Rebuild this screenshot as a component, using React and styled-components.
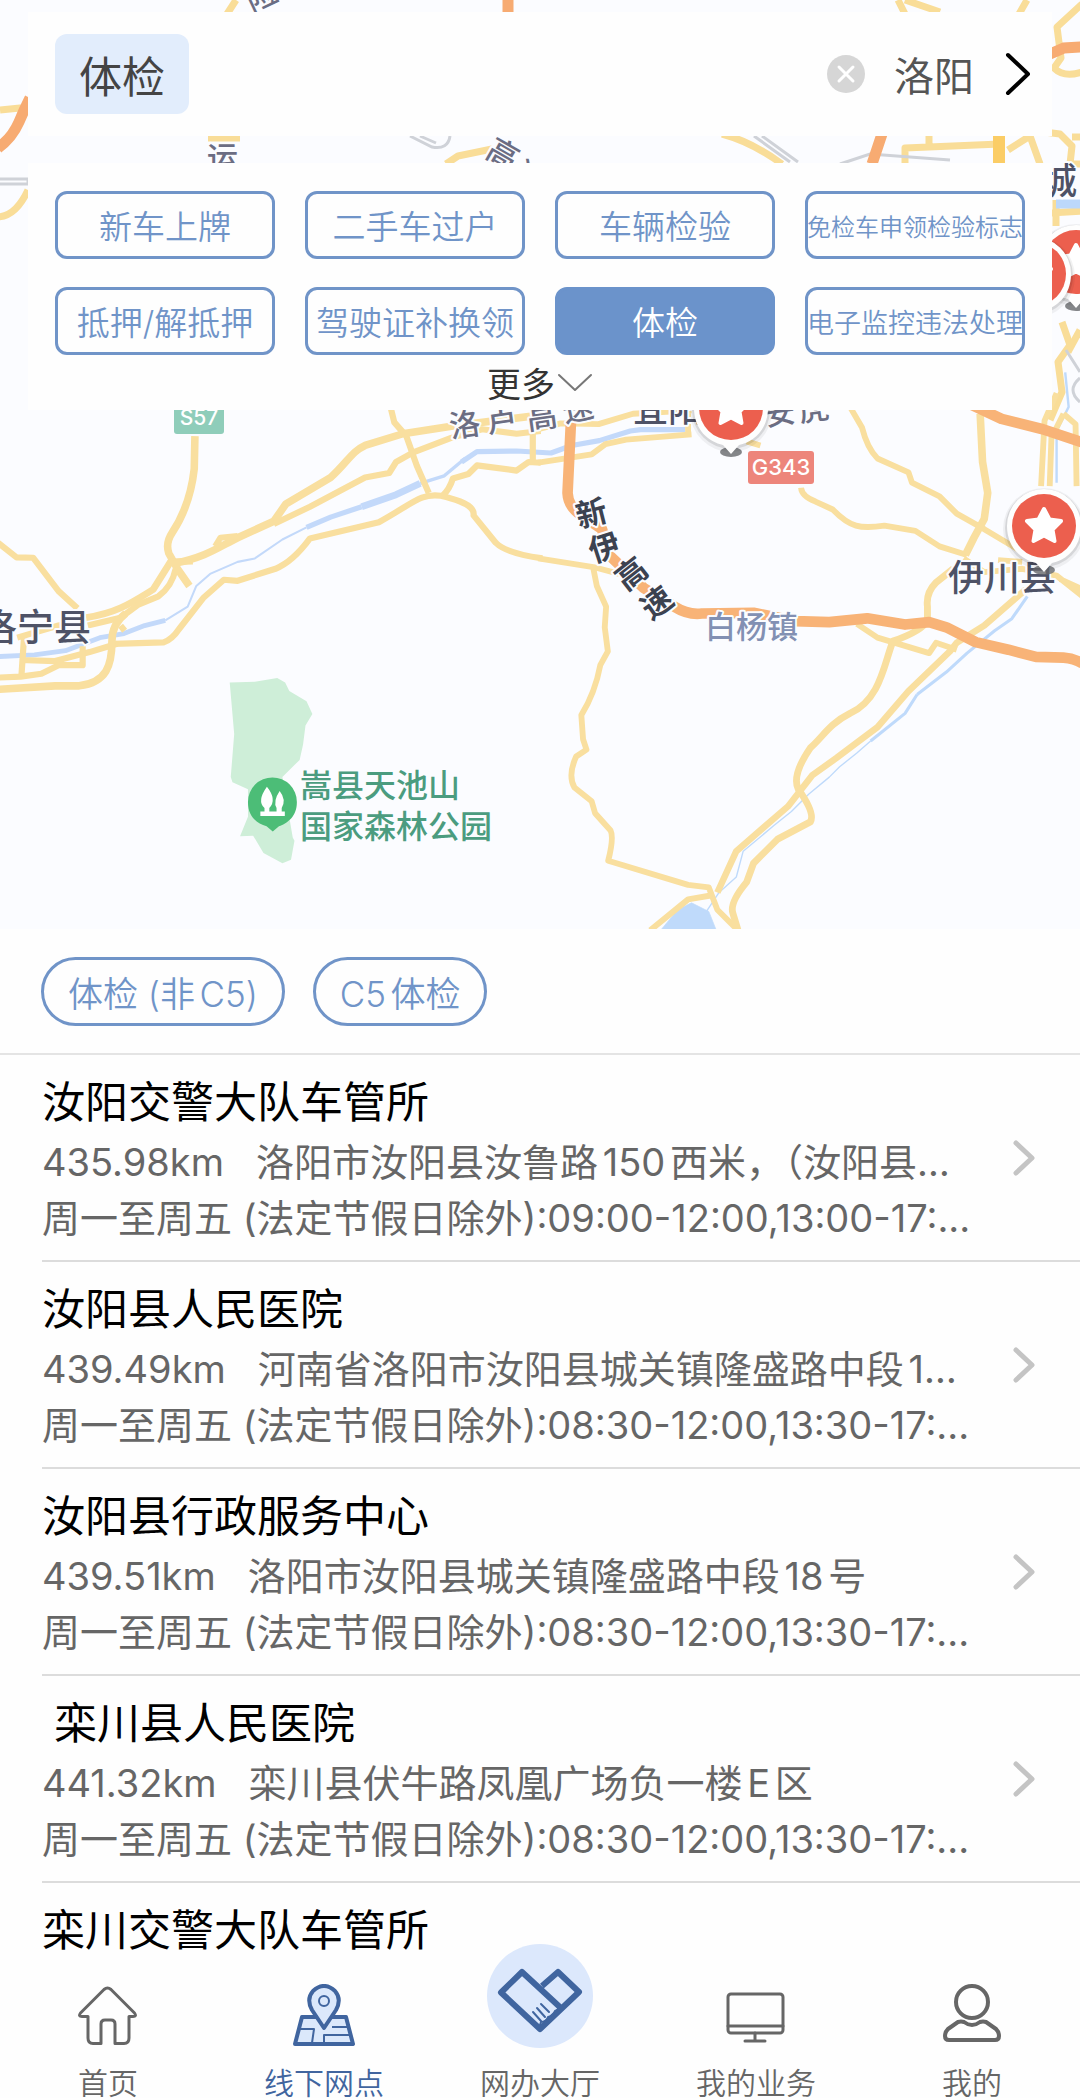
import React, { useState } from 'react';
import styled, { createGlobalStyle } from 'styled-components';

const GlobalStyle = createGlobalStyle`
  * {
    box-sizing: border-box;
  }
  body {
    margin: 0;
    background-color: #fefefe;
    font-family: Inter, "Noto Sans CJK SC", sans-serif;
    text-autospace: normal;
  }
  button, input {
    font-family: inherit;
    cursor: pointer;
  }
`;

const Screen = styled.div`
  display: flex;
  flex-direction: column;
  height: 100vh;
  overflow: hidden;
`;

const MapArea = styled.section`
  position: relative;
  flex: none;
  min-height: 929px;
  padding: 12px 28px;
  background-color: #fbfcff;
  overflow: hidden;
`;

const MapCanvas = styled.svg`
  position: absolute;
  top: 0;
  left: 0;
  width: 100%;
  height: 100%;
`;

const SearchBar = styled.div`
  position: relative;
  display: flex;
  align-items: center;
  height: 124px;
  padding: 0 20px 0 27px;
  background-color: #fefefe;
`;

const Keyword = styled.button`
  height: 80px;
  padding: 0 24px;
  border: none;
  border-radius: 12px;
  background-color: #e2edfc;
  color: #444;
  font-size: 43px;
`;

const ClearButton = styled.button`
  display: flex;
  margin-left: auto;
  padding: 0;
  border: none;
  background: none;
`;

const CityButton = styled.button`
  display: flex;
  align-items: center;
  gap: 30px;
  margin-left: 28px;
  padding: 0;
  border: none;
  background: none;
  color: #555;
  font-size: 40px;
`;

const FilterPanel = styled.div`
  position: relative;
  margin-top: 27px;
  padding: 28px 27px 0;
  background-color: #fefefe;
`;

const Services = styled.div`
  display: grid;
  grid-template-columns: repeat(4, minmax(0, 1fr));
  gap: 28px 30px;
`;

const sizes = { sm: "24px", md: "27px", lg: "33px" };

const ServiceButton = styled.button`
  display: flex;
  align-items: center;
  justify-content: center;
  height: 68px;
  padding: 0;
  border: 3px solid #7094c8;
  border-radius: 12px;
  background-color: ${(props) => (props.$active ? "#6b93cb" : "transparent")};
  border-color: ${(props) => (props.$active ? "#6b93cb" : "#7094c8")};
  color: ${(props) => (props.$active ? "#fff" : "#7094c8")};
  font-size: ${(props) => sizes[props.$size || "lg"]};
  font-weight: 350;
  white-space: nowrap;
`;

const MoreButton = styled.button`
  display: flex;
  align-items: center;
  gap: 2px;
  height: 55px;
  margin: 0 auto;
  padding: 0;
  border: none;
  background: none;
  color: #333;
  font-size: 34px;
`;

const Tags = styled.div`
  display: flex;
  flex: none;
  gap: 28px;
  padding: 28px 41px 27px;
  border-bottom: 2px solid #e4e4e4;
`;

const Tag = styled.button`
  height: 69px;
  padding: 0 24px;
  border: 3px solid #7094c8;
  border-radius: 35px;
  background: none;
  color: #7094c8;
  font-size: 35px;
  font-weight: 350;
`;

const List = styled.ul`
  flex: 1;
  min-height: 0;
  margin: 0;
  padding: 0 0 0 42px;
  list-style: none;
  overflow: hidden;
`;

const Item = styled.li`
  display: flex;
  align-items: center;
  height: 207px;
  padding-right: 44px;
  border-bottom: 2px solid #dcdcdc;
`;

const Details = styled.div`
  flex: 1;
  min-width: 0;
  min-height: 176px;
`;

const Name = styled.h2`
  margin: 0;
  color: #000;
  font-size: 43px;
  font-weight: 400;
  line-height: 64px;
  white-space: pre;
`;

const Info = styled.p`
  display: flex;
  gap: 32px;
  margin: 0;
  color: #666;
  font-size: 38px;
  font-weight: 400;
  line-height: 56px;
  white-space: nowrap;
`;

const TabBar = styled.nav`
  position: relative;
  display: flex;
  flex: none;
  align-items: flex-end;
  height: 138px;
  background-color: #fefefe;
`;

const Tab = styled.a`
  display: flex;
  flex: 1;
  flex-direction: column;
  align-items: center;
  gap: 20px;
  color: ${(props) => (props.$active ? "#41659f" : "#666")};
  font-size: 30px;
  font-weight: 350;
  line-height: 30px;
  text-decoration: none;
`;

const services = [
  { name: "新车上牌" },
  { name: "二手车过户" },
  { name: "车辆检验" },
  { name: "免检车申领检验标志", size: "sm" },
  { name: "抵押/解抵押" },
  { name: "驾驶证补换领" },
  { name: "体检" },
  { name: "电子监控违法处理", size: "md" },
];

const places = [
  {
    name: "汝阳交警大队车管所",
    distance: "435.98km",
    address: "洛阳市汝阳县汝鲁路150西米，（汝阳县…",
    time: "周一至周五 (法定节假日除外):09:00-12:00,13:00-17:...",
  },
  {
    name: "汝阳县人民医院",
    distance: "439.49km",
    address: "河南省洛阳市汝阳县城关镇隆盛路中段1…",
    time: "周一至周五 (法定节假日除外):08:30-12:00,13:30-17:...",
  },
  {
    name: "汝阳县行政服务中心",
    distance: "439.51km",
    address: "洛阳市汝阳县城关镇隆盛路中段18号",
    time: "周一至周五 (法定节假日除外):08:30-12:00,13:30-17:...",
  },
  {
    name: " 栾川县人民医院",
    distance: "441.32km",
    address: "栾川县伏牛路凤凰广场负一楼E区",
    time: "周一至周五 (法定节假日除外):08:30-12:00,13:30-17:...",
  },
  { name: "栾川交警大队车管所" },
];

const MapPin = ({ x, y }) => (
  <g transform={`translate(${x} ${y})`}>
    <ellipse cx="0" cy="44" rx="11" ry="5" fill="#66686c" opacity="0.8" />
    <circle r="41" fill="#000" opacity="0.05" cy="3" />
    <circle r="39" fill="#000" opacity="0.1" cy="2" />
    <path d="M-37 0A37 37 0 1 1 37 0C37 22 22 34 8 37L0 46L-8 37C-22 34 -37 22 -37 0Z" fill="#fefefe" />
    <circle r="32" fill="#ec5f4e" />
    <path
      d="M0 -17L5.500 -6.500L17 -5L8.500 3.500L10.500 15L0 9.500L-10.500 15L-8.500 3.500L-17 -5L-5.500 -6.500Z"
      fill="#fff" stroke="#fff" strokeWidth="4" strokeLinejoin="round"
    />
  </g>
);

const Label = ({ x, y, size = 31, weight = 500, color = "#4e5266", rotate = 0, children }) => (
  <text
    x={x} y={y} fontSize={size} fontWeight={weight} fill={color}
    stroke="#fbfcff" strokeWidth="4" strokeLinejoin="round" paintOrder="stroke"
    transform={rotate ? `rotate(${rotate} ${x} ${y})` : undefined}
  >
    {children}
  </text>
);

const RoadMap = () => (
  <MapCanvas viewBox="0 0 1080 929" preserveAspectRatio="xMidYMin slice" aria-hidden="true">
    <g fill="none" stroke="#f9dd98" strokeWidth="7" strokeLinejoin="round">
      {/* north edge */}
      <path d="M236 0L227 14M898 0L905 14M905 0L940 12M1027 0L1019 14" />
      <path d="M1082 4L1057 27L1061 58L1054 68Q1064 78 1082 72" />
      <path d="M0 110L20 108L28 112M28 190Q16 216 -2 217" />
      <path d="M208 138L240 138M446 164L458 156L492 149" />
      <path d="M722 134Q752 142 782 164M905 164V148L1000 144M929 134V147M1008 150L1030 136L1040 164" />
      <path d="M1044 132L1060 134L1072 146L1070 164L1082 164M1072 137L1082 137" />
      <path d="M1050 213L1082 211M1056 200V226M1062 322L1070 345L1058 362L1062 392L1050 420" />
      <path d="M1080 330L1068 352" />
    </g>
    <path d="M999 134V164" stroke="#fbcd66" strokeWidth="12" />
    <g fill="none" stroke="#cfd2d8" strokeWidth="3">
      <path d="M410 136L432 147Q448 150 450 136M420 136L436 143" />
      <path d="M754 136L790 162M762 136L798 162M840 164L870 154L950 160" />
      <path d="M0 179H28V184H0M1066 350L1080 372M1080 378Q1066 390 1080 402" />
    </g>
    <path d="M1056 204H1082" stroke="#bcd8fb" strokeWidth="9" />
    <g fill="none" stroke="#f7ab72" strokeWidth="11">
      <path d="M508 -2V14M1050 54L1064 48L1082 47M882 134L872 164" />
      <path d="M30 98Q24 110 19 122Q12 138 -2 148" />
    </g>

    {/* rivers */}
    <g transform="translate(0 400) scale(0.3444)" fill="none" stroke="#c3d9fa" strokeLinejoin="round">
      <path d="M-5 745L100 740L190 728L290 690L360 678L420 655L480 640" strokeWidth="14" />
      <path d="M480 640L545 600L570 540L610 505L690 470L740 460L820 405L890 370" strokeWidth="6" />
      <path d="M890 370L960 340L1050 310" strokeWidth="15" />
      <path d="M1050 310L1150 275L1220 242" strokeWidth="20" />
      <path d="M1220 242L1290 220L1350 170" strokeWidth="10" />
      <path d="M1340 180L1385 150L1500 148L1600 154L1660 132L1740 118L1830 90L1860 86H1990" strokeWidth="15" />
    </g>
    <g transform="translate(540 400) scale(0.3444)" fill="none" stroke="#bfdafb" strokeLinejoin="round">
      <path d="M1525 -80L1535 20L1500 90V240" strokeWidth="7" />
      <path d="M1415 570L1370 635L1320 670L1240 735L1180 790L1095 855" strokeWidth="9" />
      <path d="M1095 855L1060 910L960 990" strokeWidth="9" />
      <path d="M960 990L920 1025L870 1065L840 1095L780 1145L730 1195L680 1235L590 1310L570 1385L520 1430L480 1490" strokeWidth="4" />
      <path d="M350 1540L400 1480L440 1460L490 1485L512 1540Z" fill="#bfdafb" strokeWidth="2" />
    </g>

    {/* roads, west side */}
    <g transform="translate(0 400) scale(0.3444)" fill="none" stroke="#f9df9f" strokeWidth="18" strokeLinejoin="round">
      <path d="M566 105L564 200C555 280 530 340 500 385Q480 415 490 445L515 490L550 540" strokeWidth="22" />
      <path d="M-5 415L48 457L96 458L170 555L225 605" />
      <path d="M250 632C340 618 380 590 445 550L495 470L560 468" strokeWidth="20" />
      <path d="M255 655L350 632L400 595L460 570Q500 540 510 490" />
      <path d="M505 475C600 455 630 430 690 400L795 352L830 302L960 225C1010 180 1020 150 1060 132L1170 98L1320 75L1600 40" strokeWidth="22" />
      <path d="M625 425L640 400L690 395M795 360L900 310L1060 225L1130 212L1150 180L1200 152L1310 110L1400 85L1500 98L1570 90" />
      <path d="M1135 25L1145 65L1180 105L1210 190L1245 270" />
      <path d="M330 708L475 704Q500 695 520 665L590 575L650 522L690 525L800 490Q850 470 900 402L1100 355C1200 300 1220 270 1280 278C1330 290 1380 305 1375 335L1440 415Q1470 445 1575 460" />
      <path d="M1285 278Q1305 260 1315 228L1360 215L1385 190L1500 205L1535 180L1570 182M1547 90V182" />
      <path d="M60 755L160 758L260 732L340 708M70 685L62 805" />
      <path d="M50 690L170 655L240 640M240 715V770H170L120 795L60 803L-5 806" />
      <path d="M-5 840L160 830H230C310 820 325 770 325 700Q325 650 365 620" strokeWidth="22" />
      <path d="M350 655L362 670" />
    </g>

    {/* roads, east side */}
    <g transform="translate(540 400) scale(0.3444)" fill="none" stroke="#f9df9f" strokeWidth="17" strokeLinejoin="round">
      <path d="M-5 182L150 158L190 128L250 115L440 100M-5 85L60 68L170 70L270 40L440 30M430 30V100M600 120L640 132" />
      <path d="M900 20L935 80Q950 140 980 170L1070 210L1080 240L1160 280L1210 330L1290 375L1390 435" />
      <path d="M758 255Q760 280 800 295L850 318C900 370 930 375 1000 365L1090 380L1160 425L1240 450" />
      <path d="M1278 40L1285 180L1300 270L1290 345L1260 400L1235 450" strokeWidth="22" />
      <path d="M-5 460L155 485L230 505M155 490L165 540L192 600L188 660L197 730L175 770Q160 850 120 915L125 985L135 1015L105 1035Q80 1090 100 1125L150 1165L160 1200L205 1250Q215 1270 198 1338L430 1408L490 1415L515 1480L570 1535" />
      <path d="M1200 490L1150 530Q1120 560 1125 600V640Q1110 670 1025 700C1000 760 990 870 900 910C840 940 820 980 785 1010Q730 1090 750 1130Q800 1200 785 1225L690 1275L620 1345L600 1400Q550 1460 560 1490L575 1540" strokeWidth="20" />
      <path d="M1410 550L1290 655L1210 705L1190 730L1070 845L980 950L860 1040L790 1090L720 1180L570 1310L515 1430" strokeWidth="19" />
      <path d="M920 650L980 690L1130 735L1150 705L1210 725M320 1540L430 1450L500 1438" />
      <path d="M1500 -20L1465 60L1455 250M1520 40L1485 110L1480 250M1520 40L1555 70L1558 250" />
      <path d="M1230 460L1290 500L1400 490L1500 510L1575 570M1330 465L1400 470M1510 520L1575 550" />
    </g>
    <g transform="translate(540 400) scale(0.3444)" fill="none" stroke="#f8b377" strokeWidth="31" strokeLinejoin="round">
      <path d="M90 60L80 270Q82 310 120 335L180 375L200 450L300 545L390 600Q430 625 470 620L620 618L740 642L840 645L950 634L1060 652L1130 645L1180 660L1265 703L1360 725L1440 746L1520 748Q1550 750 1575 765" />
      <path d="M1255 15L1340 55L1460 85L1580 125" />
    </g>

    {/* forest park */}
    <g transform="translate(0 400) scale(0.3444)">
      <path d="M667 820L740 818L805 807L828 820L840 845L890 875L907 912L887 945L880 1000L870 1045L820 1095L850 1270L855 1280L845 1335L820 1345L765 1315L735 1265L697 1267L720 1210V1130L675 1110L670 1095L680 970Z" fill="#ceeed8" />
      <path d="M720 1167A71 71 0 1 1 862 1167C862 1210 835 1228 810 1238L792 1253L774 1238C745 1228 720 1210 720 1167Z" fill="#4cbd77" />
      <path d="M775 1123Q745 1165 768 1185V1195H756V1208H827V1195H818V1185Q832 1160 812 1135Q792 1165 803 1185V1195H782V1185Q805 1160 775 1123Z" fill="#fff" />
    </g>

    <rect x="174" y="402" width="50" height="32" rx="3" fill="#8fcdba" />
    <text x="199" y="425" fontSize="21" fontWeight="500" fill="#fff" textAnchor="middle">S57</text>
    <rect x="748" y="451" width="66" height="33" rx="3" fill="#ed857b" />
    <text x="781" y="475" fontSize="22" fontWeight="500" fill="#fff" textAnchor="middle">G343</text>

    <Label x="252" y="13" rotate={-25} color="#6b6d83">险</Label>
    <Label x="207" y="169" color="#6b6d83">运</Label>
    <Label x="484" y="156" rotate={30} color="#6b6d83">高</Label>
    <Label x="511" y="177" rotate={35} color="#6b6d83">速</Label>
    <Label x="1041" y="194" size={36}>城</Label>
    <Label x="-20" y="641" size={37}>洛宁县</Label>
    <Label x="451" y="438" rotate={-8} color="#6b6d83">洛</Label>
    <Label x="488" y="433" rotate={-8} color="#6b6d83">卢</Label>
    <Label x="528" y="430" rotate={-8} color="#6b6d83">高</Label>
    <Label x="565" y="423" rotate={-12} color="#6b6d83">速</Label>
    <Label x="633" y="422" size={35}>宜阳</Label>
    <Label x="766" y="426" rotate={-8} color="#6b6d83">安</Label>
    <Label x="800" y="422" rotate={-8} color="#6b6d83">虎</Label>
    <Label x="579" y="528" rotate={-14} weight={700} color="#3c4250">新</Label>
    <Label x="593" y="563" rotate={-18} weight={700} color="#3c4250">伊</Label>
    <Label x="626" y="592" rotate={-38} weight={700} color="#3c4250">高</Label>
    <Label x="651" y="621" rotate={-36} weight={700} color="#3c4250">速</Label>
    <Label x="705" y="638" color="#8290b3">白杨镇</Label>
    <Label x="948" y="591" size={36}>伊川县</Label>
    <Label x="300" y="797" size={32} color="#4b9c7f">嵩县天池山</Label>
    <Label x="300" y="838" size={32} color="#4b9c7f">国家森林公园</Label>

    <MapPin x={1076} y={262} />
    <MapPin x={1034} y={274} />
    <MapPin x={731} y={408} />
    <MapPin x={1044} y={526} />
  </MapCanvas>
);

const Chevron = ({ width, height, color, stroke, d }) => (
  <svg width={width} height={height} fill="none" stroke={color} strokeWidth={stroke} aria-hidden="true">
    <path d={d} strokeLinecap="round" strokeLinejoin="round" />
  </svg>
);

const HomeIcon = () => (
  <svg width="64" height="64" fill="none" stroke="#666" strokeWidth="3" strokeLinejoin="round">
    <path d="M4.500 29L28 5.500Q31.500 2.500 35 5.500L58.500 29Q61 32.500 57 32.500H53V54Q53 59.500 48 59.500H39V40Q39 36 35 36H29Q25 36 25 40V59.500H17Q12 59.500 12 54V32.500H6Q2 32.500 4.500 29Z" />
  </svg>
);

const PlacesIcon = () => (
  <svg width="64" height="64" fill="#dbe8fb" stroke="#40659f" strokeWidth="4" strokeLinejoin="round">
    <path d="M10 33H54L61 60H3Z" />
    <path d="M8 45H22L20 59M40 43H55M32 59V51H58" fill="none" strokeWidth="2" />
    <path d="M32 44L20 26Q14 15 21 7Q32 -3 43 7Q50 15 44 26Z" />
    <circle cx="32" cy="17" r="5" strokeWidth="2" />
  </svg>
);

const HandsIcon = () => (
  <svg width="106" height="104" fill="none" stroke="#40659f" strokeWidth="6" strokeLinejoin="round">
    <ellipse cx="53" cy="52" rx="53" ry="52" fill="#dce8fc" stroke="none" />
    <path d="M55 42L71 28L92 48L53 85L14 48.500L35 28L75 65" />
    <path d="M73 65L68 67Q66 72 61 73Q59 78 54 78L52 84" strokeWidth="2" />
    <path d="M54 60L62 68M50 64L58 73M46 68L54 77" strokeWidth="2" strokeLinecap="round" />
  </svg>
);

const ScreenIcon = () => (
  <svg width="64" height="64" fill="none" stroke="#666" strokeWidth="3" strokeLinecap="round">
    <rect x="4" y="10" width="55" height="39" rx="3" />
    <path d="M4 42H59M31 49V57M21 57H41" />
  </svg>
);

const UserIcon = () => (
  <svg width="64" height="64" fill="none" stroke="#666" strokeWidth="4" strokeLinejoin="round">
    <circle cx="32" cy="18" r="16" />
    <path d="M18 38Q21 37 24 38Q32 44 40 38Q43 37 46 38L56 45Q59 48 59 52Q59 56 55 56H9Q5 56 5 52Q5 48 8 45Z" />
  </svg>
);

const tabs = [
  { name: "首页", icon: <HomeIcon /> },
  { name: "线下网点", icon: <PlacesIcon />, active: true },
  { name: "网办大厅", icon: <HandsIcon /> },
  { name: "我的业务", icon: <ScreenIcon /> },
  { name: "我的", icon: <UserIcon /> },
];

const App = () => {

  const [service, setService] = useState("体检")

  return (
    <Screen>
      <GlobalStyle />
      <MapArea>
        <RoadMap />
        <SearchBar>
          <Keyword>{service}</Keyword>
          <ClearButton aria-label="清除">
            <svg width="40" height="40" fill="none" stroke="#fff" strokeWidth="3" strokeLinecap="round">
              <circle cx="20" cy="20" r="19" fill="#d6d6d6" stroke="none" />
              <path d="M13 13L27 27M27 13L13 27" />
            </svg>
          </ClearButton>
          <CityButton>
            洛阳
            <Chevron width="28" height="44" color="#000" stroke="4" d="M4 3L24 22L4 41" />
          </CityButton>
        </SearchBar>
        <FilterPanel>
          <Services>
            {services.map((item) => (
              <ServiceButton
                key={item.name}
                $size={item.size}
                $active={item.name === service}
                onClick={() => setService(item.name)}
              >
                {item.name}
              </ServiceButton>
            ))}
          </Services>
          <MoreButton>
            更多
            <Chevron width="36" height="20" color="#777" stroke="2" d="M2 2L18 17L34 2" />
          </MoreButton>
        </FilterPanel>
      </MapArea>

      <Tags>
        <Tag>体检 (非C5)</Tag>
        <Tag>C5体检</Tag>
      </Tags>

      <List>
        {places.map((place) => (
          <Item key={place.name}>
            <Details>
              <Name>{place.name}</Name>
              {place.distance && (
                <Info>
                  <span>{place.distance}</span>
                  <span>{place.address}</span>
                </Info>
              )}
              {place.time && <Info>{place.time}</Info>}
            </Details>
            <Chevron width="24" height="36" color="#c4c4c4" stroke="5" d="M4 3L20 18L4 33" />
          </Item>
        ))}
      </List>

      <TabBar>
        {tabs.map((tab) => (
          <Tab key={tab.name} href="#" $active={tab.active}>
            {tab.icon}
            {tab.name}
          </Tab>
        ))}
      </TabBar>
    </Screen>
  )
}

export default App;
